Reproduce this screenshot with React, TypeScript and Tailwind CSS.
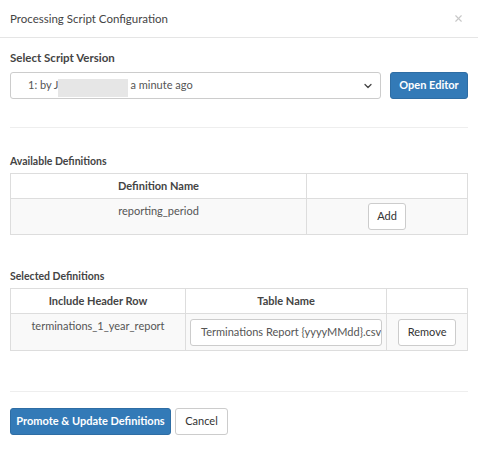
import { ChevronDown, X } from 'lucide-react'

export default function App() {
  return (
    <div className="w-[478px] h-[452px] bg-white text-[#555] font-['Lato',sans-serif] text-[11px]">
      <div className="h-[38px] flex items-center justify-between px-[10px] border-b border-[#e5e5e5]">
        <span className="text-[11.5px] text-[#444]">Processing Script Configuration</span>
        <X size={11} strokeWidth={2.5} className="text-[#c8c8c8] mr-[4px]" />
      </div>

      <div className="px-[10px]">
        <div className="pt-[13px] font-bold text-[11.5px] text-[#444] leading-[14px]">Select Script Version</div>
        <div className="flex gap-[9px] mt-[7px]">
          <div className="flex-1 h-[27px] border border-[#ccc] rounded-[3px] flex items-center pl-[17px] pr-[6px] text-[#555]">
            <span>1: by J</span>
            <span className="w-[70px] h-[18px] bg-[#e6e6e6] mt-[5px] -ml-[1px]" />
            <span className="ml-[3px]">a minute ago</span>
            <ChevronDown size={12} strokeWidth={2.5} className="ml-auto text-[#444]" />
          </div>
          <button className="w-[78px] h-[27px] bg-[#337ab7] border border-[#2e6da4] rounded-[3px] text-white font-bold text-[11px]">
            Open Editor
          </button>
        </div>

        <div className="mt-[28px] border-t border-[#eee]" />

        <div className="mt-[27px] font-bold text-[10.5px] text-[#444] leading-[13px]">Available Definitions</div>
        <table className="mt-[5px] w-full border-collapse border border-[#ddd] text-[11px]">
          <thead>
            <tr className="h-[25px]">
              <th className="w-[296px] border border-[#ddd] font-bold text-[#444]">Definition Name</th>
              <th className="border border-[#ddd]" />
            </tr>
          </thead>
          <tbody>
            <tr className="h-[36px] bg-[#f9f9f9]">
              <td className="border border-[#ddd] text-center align-top pt-[4px]">reporting_period</td>
              <td className="border border-[#ddd] text-center">
                <button className="w-[38px] h-[27px] bg-white border border-[#ccc] rounded-[3px] text-[#333]">Add</button>
              </td>
            </tr>
          </tbody>
        </table>

        <div className="mt-[35px] font-bold text-[10.5px] text-[#444] leading-[13px]">Selected Definitions</div>
        <table className="mt-[5px] w-full border-collapse border border-[#ddd] text-[11px]">
          <thead>
            <tr className="h-[25px]">
              <th className="w-[175px] border border-[#ddd] font-bold text-[#444]">Include Header Row</th>
              <th className="w-[199px] border border-[#ddd] font-bold text-[#444]">Table Name</th>
              <th className="border border-[#ddd]" />
            </tr>
          </thead>
          <tbody>
            <tr className="h-[37px] bg-[#f9f9f9]">
              <td className="border border-[#ddd] text-center align-top pt-[4px]">terminations_1_year_report</td>
              <td className="border border-[#ddd] px-[4px]">
                <div className="h-[27px] bg-white border border-[#ccc] rounded-[3px] flex items-center pl-[10px] overflow-hidden whitespace-nowrap text-[#555]">
                  Terminations Report {'{yyyyMMdd}'}.csv
                </div>
              </td>
              <td className="border border-[#ddd] text-center">
                <button className="w-[58px] h-[27px] bg-white border border-[#ccc] rounded-[3px] text-[#333]">Remove</button>
              </td>
            </tr>
          </tbody>
        </table>

        <div className="mt-[40px] border-t border-[#eee]" />

        <div className="flex gap-[4px] mt-[16px]">
          <button className="w-[161px] h-[27px] bg-[#337ab7] border border-[#2e6da4] rounded-[3px] text-white font-bold text-[11px]">
            Promote &amp; Update Definitions
          </button>
          <button className="w-[53px] h-[27px] bg-white border border-[#ccc] rounded-[3px] text-[#333]">Cancel</button>
        </div>
      </div>
    </div>
  )
}
